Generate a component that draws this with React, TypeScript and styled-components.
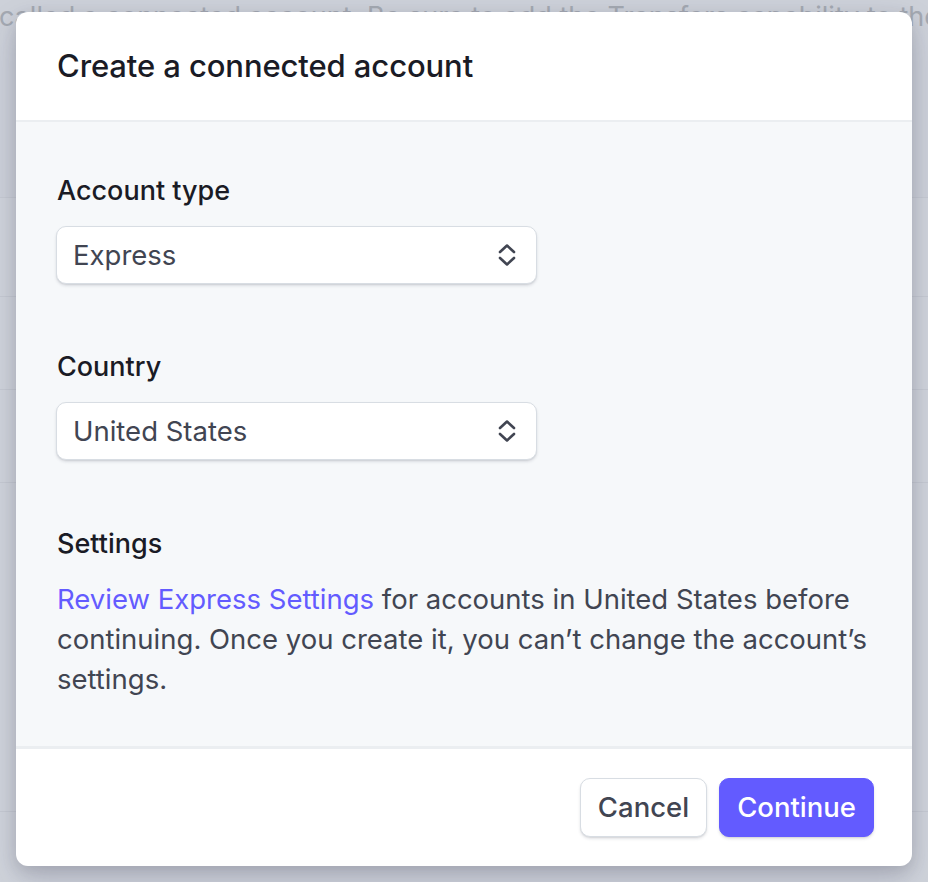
import React from "react";
import styled, { createGlobalStyle } from "styled-components";

const GlobalStyle = createGlobalStyle`
  html, body { margin: 0; padding: 0; }
  body {
    font-family: Inter, "Noto Sans", "Liberation Sans", sans-serif;
    -webkit-font-smoothing: antialiased;
  }
  * { box-sizing: border-box; }
`;

const Page = styled.div`
  position: relative;
  width: 928px;
  height: 882px;
  overflow: hidden;
  background: #d0d4db;
`;

const Backdrop = styled.div`
  display: flex;
  flex-direction: column;
`;

const BackRow = styled.div<{ $h: number; $tint?: boolean }>`
  height: ${(p) => p.$h}px;
  border-bottom: 1px solid #c6cad2;
  background: ${(p) => (p.$tint ? "#cdd1d9" : "transparent")};
  overflow: hidden;
`;

const BackText = styled.div`
  margin: 1px 0 0 -1px;
  font-size: 27px;
  line-height: 32px;
  color: #a4a9b2;
  white-space: nowrap;
`;

const Modal = styled.div`
  position: absolute;
  top: 12px;
  left: 16px;
  width: 896px;
  height: 854px;
  display: flex;
  flex-direction: column;
  background: #ffffff;
  border-radius: 12px;
  overflow: hidden;
  box-shadow: 0 15px 35px rgba(50, 50, 93, 0.18), 0 5px 15px rgba(0, 0, 0, 0.12);
`;

const Header = styled.div`
  height: 110px;
  padding: 0 40px 0 41px;
  display: flex;
  align-items: center;
  border-bottom: 2px solid #ebeef1;
  flex-shrink: 0;
`;

const Title = styled.h1`
  margin: 0;
  font-size: 31px;
  line-height: 36px;
  font-weight: 500;
  color: #1a1b25;
  letter-spacing: -0.1px;
`;

const Body = styled.div`
  flex: 1;
  background: #f6f8fa;
  padding: 53px 40px 0 40px;
  display: flex;
  flex-direction: column;
  border-bottom: 3px solid #ebeef1;
`;

const Field = styled.div<{ $gap?: number }>`
  display: flex;
  flex-direction: column;
  margin-bottom: ${(p) => p.$gap ?? 0}px;
`;

const Label = styled.div`
  font-size: 27px;
  line-height: 32px;
  font-weight: 500;
  color: #1a1b25;
  padding-left: 1px;
  margin-bottom: 19px;
`;

const SelectBox = styled.div`
  width: 481px;
  height: 58px;
  display: flex;
  align-items: center;
  justify-content: space-between;
  padding: 0 19px 0 16px;
  background: #ffffff;
  border-radius: 10px;
  border: 1px solid #d8dde3;
  box-shadow: 0 2px 3px rgba(60, 66, 87, 0.14), 0 1px 1px rgba(0, 0, 0, 0.06);
  font-size: 27.5px;
  color: #414552;
`;

const Paragraph = styled.p`
  margin: 0;
  font-size: 27.5px;
  line-height: 40px;
  color: #414552;
  padding-left: 1px;
`;

const Link = styled.a`
  color: #635bff;
  text-decoration: none;
`;

const Footer = styled.div`
  height: 117px;
  display: flex;
  align-items: center;
  justify-content: flex-end;
  gap: 12px;
  padding: 0 38px 1px 0;
  flex-shrink: 0;
`;

const Button = styled.button<{ $primary?: boolean }>`
  height: 59px;
  padding: 0 17px;
  border-radius: 10px;
  font-family: inherit;
  font-size: 27.5px;
  font-weight: 500;
  cursor: pointer;
  border: 1px solid ${(p) => (p.$primary ? "#635bff" : "#d8dde3")};
  background: ${(p) => (p.$primary ? "#635bff" : "#ffffff")};
  color: ${(p) => (p.$primary ? "#ffffff" : "#414552")};
  box-shadow: 0 2px 3px rgba(60, 66, 87, 0.14), 0 1px 1px rgba(0, 0, 0, 0.06);
`;

const Chevrons = () => (
  <svg width="20" height="26" viewBox="0 0 20 26" fill="none">
    <path
      d="M3 10 L10 3.5 L17 10"
      stroke="#414552"
      strokeWidth="2.6"
      strokeLinecap="round"
      strokeLinejoin="round"
    />
    <path
      d="M3 16 L10 22.5 L17 16"
      stroke="#414552"
      strokeWidth="2.6"
      strokeLinecap="round"
      strokeLinejoin="round"
    />
  </svg>
);

const Select = ({ value }: { value: string }) => (
  <SelectBox>
    <span>{value}</span>
    <Chevrons />
  </SelectBox>
);

export default function App() {
  return (
    <>
      <GlobalStyle />
      <Page>
        <Backdrop>
          <BackRow $h={198} $tint>
            <BackText>
              called a connected account. Be sure to add the Transfers capability to the
            </BackText>
          </BackRow>
          <BackRow $h={99} />
          <BackRow $h={93} />
          <BackRow $h={93} />
          <BackRow $h={329} />
        </Backdrop>
        <Modal>
          <Header>
            <Title>Create a connected account</Title>
          </Header>
          <Body>
            <Field $gap={67}>
              <Label>Account type</Label>
              <Select value="Express" />
            </Field>
            <Field $gap={68}>
              <Label>Country</Label>
              <Select value="United States" />
            </Field>
            <Field>
              <Label>Settings</Label>
              <Paragraph>
                <Link href="#">Review Express Settings</Link> for accounts in United States before
                continuing. Once you create it, you can’t change the account’s settings.
              </Paragraph>
            </Field>
          </Body>
          <Footer>
            <Button>Cancel</Button>
            <Button $primary>Continue</Button>
          </Footer>
        </Modal>
      </Page>
    </>
  );
}
